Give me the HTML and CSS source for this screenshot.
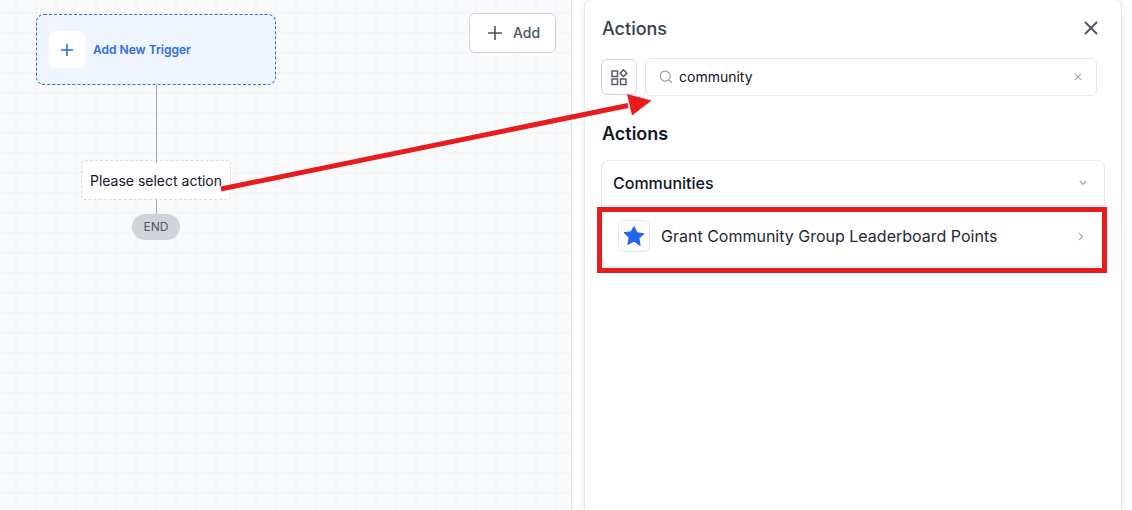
FILE: index.html
```html
<!DOCTYPE html>
<html lang="en">
<head>
<meta charset="utf-8">
<title>Actions</title>
<link rel="stylesheet" href="styles.css">
</head>
<body>
<div class="app">
  <section class="canvas">
    <div class="node-trigger">
      <span class="plus-box">
        <svg width="14" height="14" viewBox="0 0 14 14"><path d="M7 1v12M1 7h12" stroke="#2f6bea" stroke-width="1.6" fill="none"/></svg>
      </span>
      <span class="trigger-label">Add New Trigger</span>
    </div>
    <div class="node-action">Please select action</div>
    <div class="line line-a"></div>
    <div class="line line-b"></div>
    <div class="node-end">END</div>
    <button class="add-btn">
      <svg width="14" height="14" viewBox="0 0 14 14"><path d="M7 0v14M0 7h14" stroke="#4b5563" stroke-width="1.6" fill="none"/></svg>
      <span>Add</span>
    </button>
  </section>
  <aside class="panel">
    <header class="panel-head">
      <h2 class="panel-title">Actions</h2>
      <svg class="close" width="14" height="14" viewBox="0 0 14 14"><path d="M1 1l12 12M13 1L1 13" stroke="#4b5563" stroke-width="1.9" fill="none"/></svg>
    </header>
    <div class="search-row">
      <button class="grid-btn">
        <svg width="17" height="17" viewBox="0 0 17 17" fill="none" stroke="#4b5563" stroke-width="1.4"><rect x="1" y="2" width="5.500" height="5.500"/><rect x="1" y="10" width="5.500" height="5.500"/><rect x="9.500" y="10" width="5.500" height="5.500"/><path d="M12.500 .8l3.400 3.400-3.400 3.400-3.400-3.400z"/></svg>
      </button>
      <div class="search">
        <svg width="14" height="14" viewBox="0 0 14 14" fill="none" stroke="#9ca3af" stroke-width="1.2"><circle cx="6.200" cy="6.200" r="5"/><path d="M10 10l3 3"/></svg>
        <span class="search-text">community</span>
        <svg class="clear" width="8" height="8" viewBox="0 0 8 8"><path d="M.8.8l6.400 6.400M7.200.8L.8 7.200" stroke="#9ca3af" stroke-width="1.100" fill="none"/></svg>
      </div>
    </div>
    <h3 class="section-title">Actions</h3>
    <div class="group">
      <div class="group-head">
        <span>Communities</span>
        <svg width="8" height="6" viewBox="0 0 8 6"><path d="M.8 1l3.200 3.400L7.200 1" stroke="#9ca3af" stroke-width="1.100" fill="none"/></svg>
      </div>
      <div class="item">
        <span class="star-box">
          <svg width="24" height="24" viewBox="0 0 24 24"><path fill="#2563eb" stroke="#2563eb" stroke-width="1" stroke-linejoin="round" d="M12 2.500l3 6.300 6.900.9-5 4.800 1.300 6.900L12 17.200l-6.200 3.200 1.300-6.900-5-4.800 6.900-.9z"/></svg>
        </span>
        <span class="item-label">Grant Community Group Leaderboard Points</span>
        <svg class="item-arrow" width="6" height="9" viewBox="0 0 6 9"><path d="M1 .8l3.600 3.700L1 8.200" stroke="#9ca3af" stroke-width="1.100" fill="none"/></svg>
      </div>
    </div>
  </aside>
</div>
<svg class="annotation" width="1132" height="510" viewBox="0 0 1132 510" aria-hidden="true">
  <path d="M221 189L628 105.500" stroke="#e81c1c" stroke-width="5" fill="none"/>
  <path d="M627 94L651.500 100.500 632 115.500z" fill="#e81c1c"/>
  <rect x="599.500" y="209.500" width="505" height="61" stroke="#e81c1c" stroke-width="5" fill="none"/>
</svg>
</body>
</html>
```
FILE: styles.css
```css
* { box-sizing: border-box; }
html, body { margin: 0; height: 100%; }
body {
  position: relative;
  width: 1132px;
  height: 510px;
  overflow: hidden;
  background: #fff;
  font-family: Inter, "Liberation Sans", sans-serif;
  color: #111827;
}
.app { display: flex; height: 510px; }

.canvas {
  position: relative;
  width: 572px;
  flex: none;
  background-color: #f9fafc;
  background-image:
    linear-gradient(#f5f6f8 2px, transparent 2px),
    linear-gradient(90deg, #f5f6f8 2px, transparent 2px);
  background-size: 20px 20px;
  background-position: 15px 12px;
  border-right: 1px solid #e5e7eb;
}
.node-trigger {
  position: absolute;
  left: 36px;
  top: 14px;
  width: 240px;
  height: 71px;
  display: flex;
  align-items: center;
  gap: 8px;
  padding-left: 12px;
  background: #eff6ff;
  border: 1px dashed #2f6bea;
  border-radius: 8px;
}
.plus-box {
  width: 36px;
  height: 37px;
  display: flex;
  align-items: center;
  justify-content: center;
  background: #fff;
  border-radius: 6px;
}
.trigger-label { font-size: 12px; font-weight: 600; color: #2f6bea; }
.line { position: absolute; left: 156px; width: 1px; background: #a8acb3; }
.line-a { top: 85px; height: 78px; }
.line-b { top: 199px; height: 15px; }
.node-action {
  position: absolute;
  left: 81px;
  top: 160px;
  width: 150px;
  height: 40px;
  display: flex;
  align-items: center;
  justify-content: center;
  font-size: 14px;
  color: #111827;
  background: #fff;
  border: 1px dashed #d9dce1;
  border-radius: 4px;
}
.node-end {
  position: absolute;
  left: 132px;
  top: 214px;
  width: 48px;
  height: 26px;
  display: flex;
  align-items: center;
  justify-content: center;
  padding-bottom: 2px;
  font-size: 12px;
  color: #4b5563;
  background: #d1d5db;
  border-radius: 13px;
}
.add-btn {
  position: absolute;
  left: 469px;
  top: 13px;
  width: 87px;
  height: 40px;
  display: flex;
  align-items: center;
  gap: 11px;
  padding: 0 0 2px 18px;
  font: 500 14px Inter, "Liberation Sans", sans-serif;
  color: #4b5563;
  background: #fff;
  border: 1px solid #d1d5db;
  border-radius: 6px;
}
.add-btn svg { margin-top: 2px; }

.panel {
  width: 538px;
  height: 520px;
  margin: -1px 0 0 12px;
  padding: 0 16px;
  flex: none;
  background: #fff;
  border: 1px solid #e5e7eb;
  border-radius: 8px;
  box-shadow: 0 0 8px rgba(17, 24, 39, .07);
}
.panel-head {
  display: flex;
  align-items: center;
  justify-content: space-between;
  height: 58px;
  padding-bottom: 2px;
}
.panel-title { margin: 0 0 0 1px; font-size: 18px; font-weight: 500; color: #374151; }
.close { margin-right: 7px; }
.search-row { display: flex; gap: 8px; align-items: center; height: 38px; padding-right: 8px; }
.grid-btn {
  width: 36px;
  height: 36px;
  padding: 0;
  display: flex;
  align-items: center;
  justify-content: center;
  flex: none;
  background: #fff;
  border: 1px solid #d1d5db;
  border-radius: 6px;
}
.search {
  flex: 1;
  height: 38px;
  display: flex;
  align-items: center;
  padding: 0 14px 0 13px;
  border: 1px solid #e5e7eb;
  border-radius: 6px;
}
.search-text { flex: 1; margin-left: 6px; padding-bottom: 1px; font-size: 14px; color: #111827; }
.section-title { margin: 27px 0 15px 1px; height: 22px; font-size: 18px; line-height: 22px; font-weight: 600; color: #111827; }
.group {
  border: 1px solid #e5e7eb;
  border-radius: 8px;
}
.group-head {
  display: flex;
  align-items: center;
  justify-content: space-between;
  height: 45px;
  padding: 0 17px 0 11px;
  font-size: 16px;
  font-weight: 500;
  color: #111827;
  border-bottom: 1px solid #e5e7eb;
}
.item {
  display: flex;
  align-items: center;
  height: 60px;
  padding: 0 20px 0 16px;
  font-size: 16px;
}
.star-box {
  width: 32px;
  height: 32px;
  display: flex;
  align-items: center;
  justify-content: center;
  flex: none;
  border: 1px solid #e5e7eb;
  border-radius: 6px;
}
.item-label { flex: 1; margin-left: 11px; color: #1f2937; }

.annotation { position: absolute; left: 0; top: 0; pointer-events: none; }
```
